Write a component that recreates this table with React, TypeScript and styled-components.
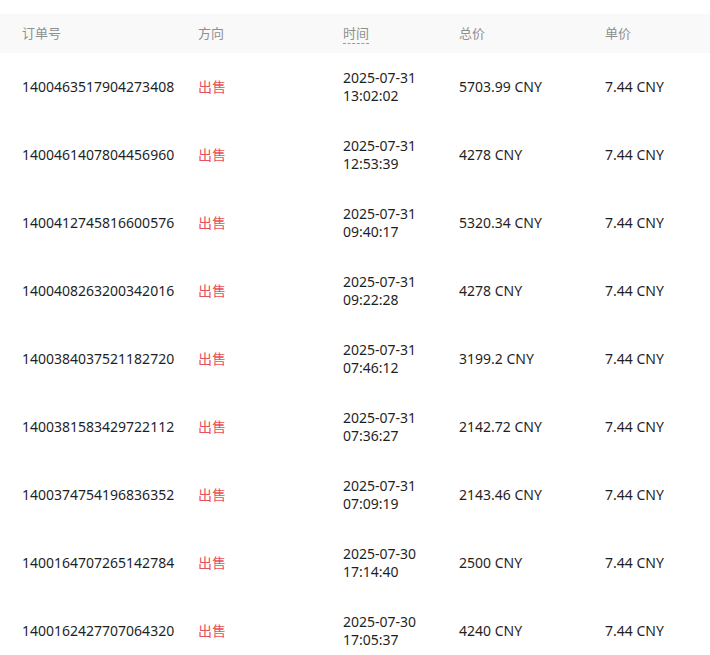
import React from 'react';
import styled, { createGlobalStyle } from 'styled-components';

const GlobalStyle = createGlobalStyle`
  body {
    margin: 0;
    background: #ffffff;
    font-family: "Noto Sans", "Noto Sans CJK SC", sans-serif;
  }
`;

const Page = styled.div`
  padding-top: 14px;
  width: 710px;
`;

const Grid = styled.div`
  display: grid;
  grid-template-columns: 176px 145px 116px 146px 1fr;
  padding-left: 22px;
  align-items: center;
`;

const HeaderRow = styled(Grid)`
  height: 39px;
  padding-bottom: 2px;
  box-sizing: border-box;
  background: #f9f9f9;
`;

const HeaderCell = styled.div<{ $dashed?: boolean }>`
  font-size: 13px;
  color: #8f8f8f;
  span {
    border-bottom: ${p => (p.$dashed ? '1px dashed #9a9a9a' : 'none')};
    padding-bottom: 1px;
  }
`;

const Row = styled(Grid)`
  height: 68px;
`;

const Cell = styled.div`
  font-size: 14px;
  color: #1f1f1f;
  line-height: 18px;
`;

const Side = styled(Cell)`
  color: #e8505a;
`;

const TimeCell = styled(Cell)`
  display: flex;
  flex-direction: column;
`;

const orders = [
  ['1400463517904273408', '2025-07-31', '13:02:02', '5703.99 CNY'],
  ['1400461407804456960', '2025-07-31', '12:53:39', '4278 CNY'],
  ['1400412745816600576', '2025-07-31', '09:40:17', '5320.34 CNY'],
  ['1400408263200342016', '2025-07-31', '09:22:28', '4278 CNY'],
  ['1400384037521182720', '2025-07-31', '07:46:12', '3199.2 CNY'],
  ['1400381583429722112', '2025-07-31', '07:36:27', '2142.72 CNY'],
  ['1400374754196836352', '2025-07-31', '07:09:19', '2143.46 CNY'],
  ['1400164707265142784', '2025-07-30', '17:14:40', '2500 CNY'],
  ['1400162427707064320', '2025-07-30', '17:05:37', '4240 CNY'],
];

const App: React.FC = () => {
  return (
    <Page>
      <GlobalStyle />
      <HeaderRow>
        <HeaderCell><span>订单号</span></HeaderCell>
        <HeaderCell><span>方向</span></HeaderCell>
        <HeaderCell $dashed><span>时间</span></HeaderCell>
        <HeaderCell><span>总价</span></HeaderCell>
        <HeaderCell><span>单价</span></HeaderCell>
      </HeaderRow>
      {orders.map(([id, date, time, total]) => (
        <Row key={id}>
          <Cell>{id}</Cell>
          <Side>出售</Side>
          <TimeCell>
            <span>{date}</span>
            <span>{time}</span>
          </TimeCell>
          <Cell>{total}</Cell>
          <Cell>7.44 CNY</Cell>
        </Row>
      ))}
    </Page>
  );
};

export default App;
